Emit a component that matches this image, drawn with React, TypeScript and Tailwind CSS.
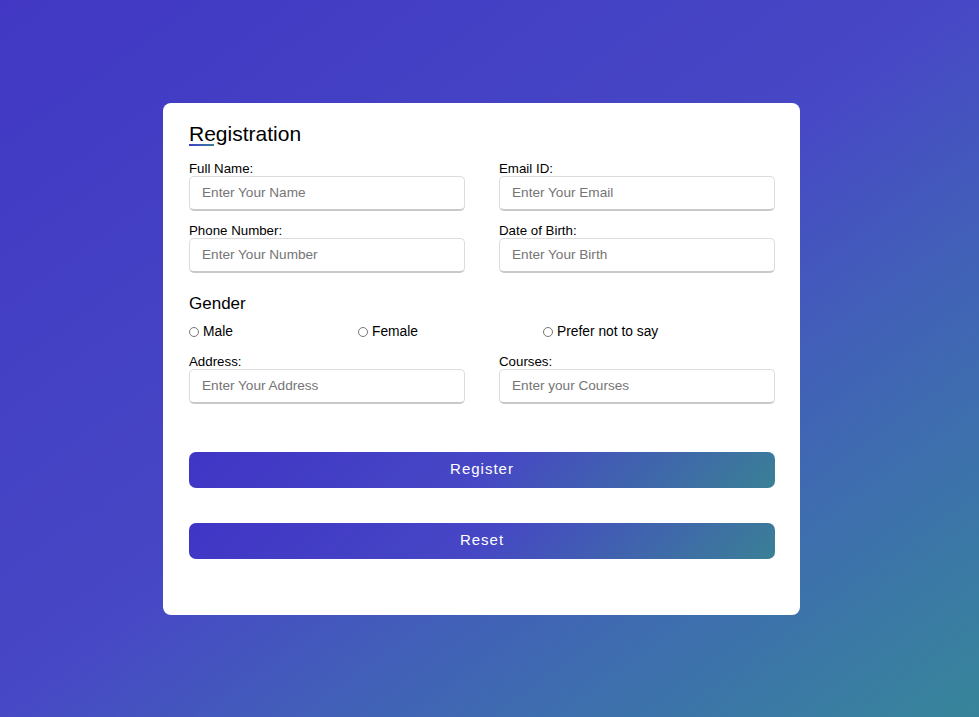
import React from 'react';

const fields = [
    [
        { label: 'Full Name:', placeholder: 'Enter Your Name' },
        { label: 'Email ID:', placeholder: 'Enter Your Email' },
    ],
    [
        { label: 'Phone Number:', placeholder: 'Enter Your Number' },
        { label: 'Date of Birth:', placeholder: 'Enter Your Birth' },
    ],
];

function Field({ label, placeholder }: { label: string; placeholder: string }) {
    return (
        <div className="flex flex-col">
            <label className="pt-[1px] text-[13.3px] leading-[15px] text-black">{label}</label>
            <input
                type="text"
                placeholder={placeholder}
                className="h-[35px] w-full rounded-[5px] border border-[#dcdcdc] border-b-2 border-b-[#c9c9c9] bg-white px-[12px] text-[13.6px] text-black outline-none placeholder:text-[#757575]"
            />
        </div>
    );
}

function Radio({ label, className }: { label: string; className?: string }) {
    return (
        <label className={`flex items-center gap-[4px] text-[13.8px] leading-[16px] text-black ${className ?? ''}`}>
            <span className="h-[10px] w-[10px] rounded-full border border-[#767676] bg-white" />
            {label}
        </label>
    );
}

export default function App() {
    return (
        <div
            className="flex min-h-[717px] w-full items-center justify-center bg-gradient-to-br from-[#4137c4] via-[#4748c5] to-[#37859a] pr-4"
            style={{ fontFamily: '"Liberation Sans", Arial, sans-serif' }}
        >
            <div className="w-[637px] rounded-[8px] bg-white pb-[56px] pl-[26px] pr-[25px] pt-[19px]">
                {/* Title */}
                <div className="relative inline-block text-[21px] leading-[24px] text-black">
                    Registration
                    <span className="absolute bottom-[0px] left-0 h-[2px] w-[25px] bg-gradient-to-r from-[#4038c6] to-[#3a7f96]" />
                </div>

                <div className="mt-[12px] flex flex-col gap-[11px]">
                    {fields.map((row, i) => (
                        <div key={i} className="grid grid-cols-2 gap-[34px]">
                            {row.map((f) => (
                                <Field key={f.label} {...f} />
                            ))}
                        </div>
                    ))}
                </div>

                {/* Gender */}
                <div className="mt-[21px] text-[17px] leading-[20px] text-black">Gender</div>
                <div className="mt-[10px] flex items-center">
                    <Radio label="Male" className="w-[169px]" />
                    <Radio label="Female" className="w-[185px]" />
                    <Radio label="Prefer not to say" />
                </div>

                <div className="mt-[13px] grid grid-cols-2 gap-[34px]">
                    <Field label="Address:" placeholder="Enter Your Address" />
                    <Field label="Courses:" placeholder="Enter your Courses" />
                </div>

                {/* Buttons */}
                <button className="mt-[48px] block h-[36px] w-full rounded-[7px] bg-[linear-gradient(135deg,#4035c6_0%,#4647c5_50%,#3a8096_100%)] text-[15px] tracking-[1px] text-white">
                    Register
                </button>
                <button className="mt-[35px] block h-[36px] w-full rounded-[7px] bg-[linear-gradient(135deg,#4035c6_0%,#4647c5_50%,#3a8096_100%)] text-[15px] tracking-[1px] text-white">
                    Reset
                </button>
            </div>
        </div>
    );
}
